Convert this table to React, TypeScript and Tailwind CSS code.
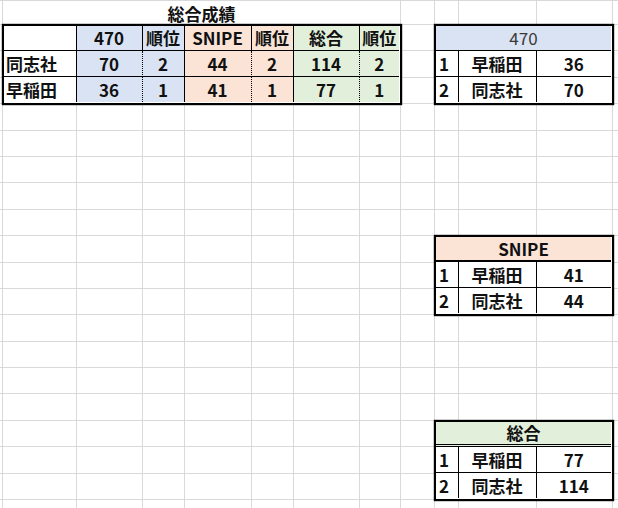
import clsx from "clsx";

const GRID_LINE = "border-r border-b border-[#d9d9d9]";
const BLUE = "bg-[#dae3f3]";
const ORANGE = "bg-[#fbe4d6]";
const GREEN = "bg-[#e2efda]";

// 13 columns x 20 rows, minus the cells covered by the title and the four tables
const BLANK_CELLS = 13 * 20 - 55;

const headers = [
  { label: "", bg: "bg-white" },
  { label: "470", bg: BLUE },
  { label: "順位", bg: BLUE },
  { label: "SNIPE", bg: ORANGE },
  { label: "順位", bg: ORANGE },
  { label: "総合", bg: GREEN },
  { label: "順位", bg: GREEN },
];

const results = [
  ["同志社", "70", "2", "44", "2", "114", "2"],
  ["早稲田", "36", "1", "41", "1", "77", "1"],
];

function MainTable() {
  return (
    <div className="relative z-10 col-start-2 col-span-7 row-start-2 row-span-3 grid grid-cols-[72.5px_66px_42px_67px_42px_66px_39.5px] grid-rows-[24.9px_26.4px_24.9px] border-[1.5px] border-black shadow-[0_0_0_1.2px_#000] text-[17px] font-bold text-[#111]">
      {headers.map((h, i) => (
        <div
          key={i}
          className={clsx(
            "flex items-center justify-center border-b border-black",
            i < 6 && "border-r",
            h.bg
          )}
        >
          {h.label}
        </div>
      ))}
      {results.map((row, r) =>
        row.map((v, i) => (
          <div
            key={`${r}-${i}`}
            className={clsx(
              "flex items-center",
              i === 0 ? "justify-start pl-[2px] bg-white" : "justify-center",
              headers[i].bg,
              i === 0 && "bg-white",
              r === 0 && "border-b border-black",
              i < 6 && "border-r border-r-black",
              i % 2 === 1 && "[border-right-style:dotted] border-r-[#666]"
            )}
          >
            {v}
          </div>
        ))
      )}
    </div>
  );
}

function RankTable({
  title,
  place,
  headerClass,
  rows,
}: {
  title: string;
  place: string;
  headerClass: string;
  rows: [string, string, string][];
}) {
  return (
    <div
      className={clsx(
        "relative z-10 col-start-10 col-span-3 row-span-3 grid grid-cols-[22.5px_78px_74.5px] grid-rows-[24.9px_26.4px_24.9px] border-[1.5px] border-black shadow-[0_0_0_1.2px_#000] text-[17px] font-bold text-[#111] bg-white",
        place
      )}
    >
      <div
        className={clsx(
          "col-span-3 flex items-center justify-center border-black",
          headerClass
        )}
      >
        {title}
      </div>
      {rows.map((row, r) =>
        row.map((v, i) => (
          <div
            key={`${r}-${i}`}
            className={clsx(
              "flex items-center border-black",
              i === 0 ? "justify-start pl-[3px]" : "justify-center",
              i < 2 && "border-r",
              r === 0 && "border-b"
            )}
          >
            {v}
          </div>
        ))
      )}
    </div>
  );
}

export default function App() {
  return (
    <div className="w-[618px] h-[508px] overflow-hidden bg-white font-['Noto_Sans_CJK_JP','Noto_Sans',sans-serif]">
      <div className="grid grid-cols-[3px_74px_66px_42px_67px_42px_66px_41px_34px_24px_78px_76px_80px] grid-rows-[24px_repeat(19,26.4px)] border-t border-[#d9d9d9]">
        <div className="col-start-2 col-span-7 row-start-1 flex items-center justify-center border-r border-[#d9d9d9] pt-[2px] text-[17px] font-bold text-[#111]">
          総合成績
        </div>
        <MainTable />
        <RankTable
          title="470"
          place="row-start-2"
          headerClass={clsx(BLUE, "border-b font-normal text-[#3a3a3a]")}
          rows={[
            ["1", "早稲田", "36"],
            ["2", "同志社", "70"],
          ]}
        />
        <RankTable
          title="SNIPE"
          place="row-start-10"
          headerClass={clsx(ORANGE, "border-b-2")}
          rows={[
            ["1", "早稲田", "41"],
            ["2", "同志社", "44"],
          ]}
        />
        <RankTable
          title="総合"
          place="row-start-17"
          headerClass={clsx(GREEN, "border-b-[3px] border-double")}
          rows={[
            ["1", "早稲田", "77"],
            ["2", "同志社", "114"],
          ]}
        />
        {Array.from({ length: BLANK_CELLS }).map((_, i) => (
          <div key={i} className={GRID_LINE} />
        ))}
      </div>
    </div>
  );
}
